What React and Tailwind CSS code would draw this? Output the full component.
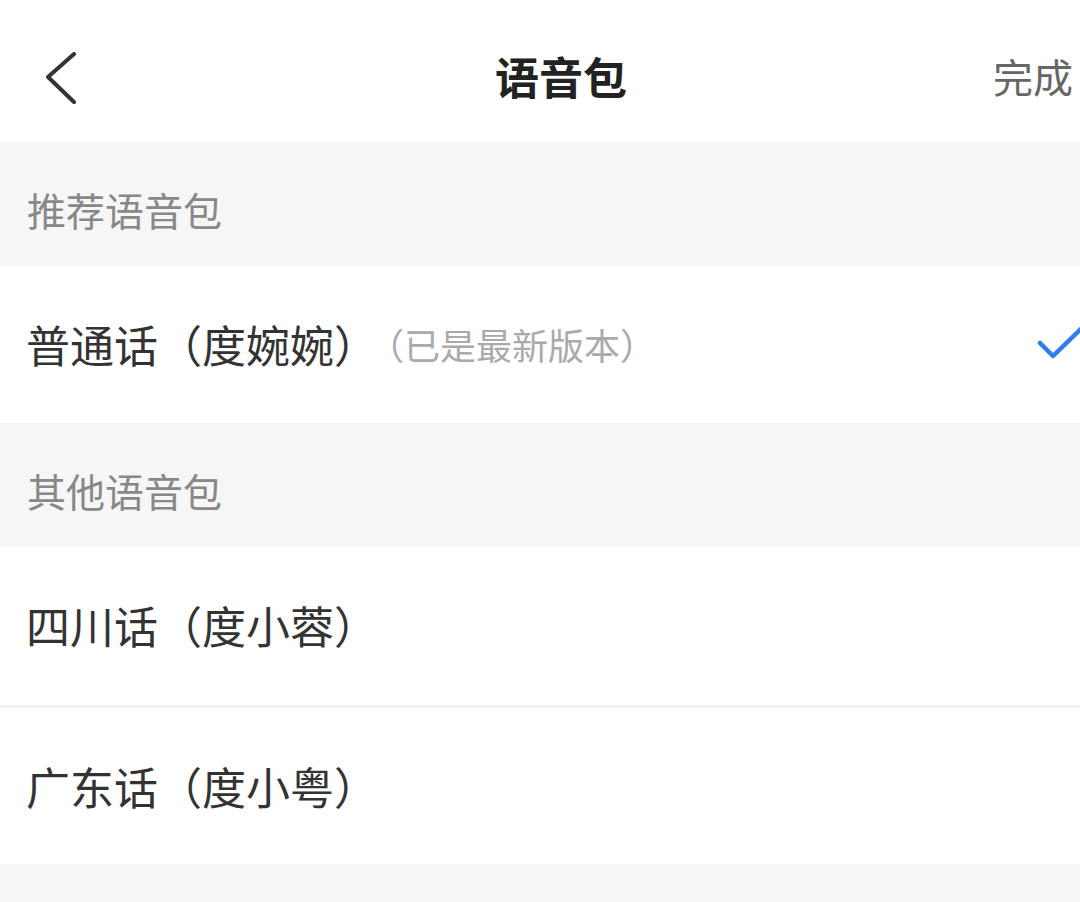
export default function App() {
  const font = { fontFamily: '"Noto Sans CJK SC", "Noto Sans", sans-serif' };

  return (
    <div className="w-[1080px] h-[902px] overflow-hidden bg-[#f6f6f6]" style={font}>
      {/* Top bar */}
      <div className="h-[142px] bg-white flex items-center pt-[4px]">
        <button className="w-[120px] h-full flex items-center pl-[44px] pt-[12px]">
          <svg width="34" height="54" viewBox="0 0 34 54" fill="none">
            <path d="M30 2 L4 25 L30 50" stroke="#333" strokeWidth="4" strokeLinecap="round" strokeLinejoin="round" />
          </svg>
        </button>
        <h1 className="flex-1 text-center pl-[42px] mt-[6px] text-[44px] font-bold text-[#222] leading-none">语音包</h1>
        <button className="w-[120px] text-right pr-[7px] pt-[6px] text-[40px] text-[#666] leading-none">完成</button>
      </div>

      {/* Recommended */}
      <div className="h-[124px] flex items-center pl-[27px] pt-[10px] text-[39px] text-[#888]">推荐语音包</div>
      <div className="h-[157px] bg-white flex items-center pl-[26px] pb-[2px]">
        <span className="text-[44px] text-[#333]">普通话（度婉婉）</span>
        <span className="text-[36px] text-[#aaa] ml-[-10px]">（已是最新版本）</span>
        <svg className="ml-auto mr-[-16px] shrink-0" width="60" height="40" viewBox="0 0 60 40" fill="none">
          <path d="M4 19 L17 32 L50 0" stroke="#2f7cf3" strokeWidth="4.5" strokeLinecap="round" strokeLinejoin="round" />
        </svg>
      </div>

      {/* Others */}
      <div className="h-[124px] flex items-center pl-[27px] pt-[10px] text-[39px] text-[#888]">其他语音包</div>
      <div className="bg-white">
        <div className="h-[161px] flex items-center pl-[26px] pb-[3px] border-b-[3px] border-[#f2f2f2]">
          <span className="text-[44px] text-[#333]">四川话（度小蓉）</span>
        </div>
        <div className="h-[156px] flex items-center pl-[26px]">
          <span className="text-[44px] text-[#333]">广东话（度小粤）</span>
        </div>
      </div>
    </div>
  );
}
